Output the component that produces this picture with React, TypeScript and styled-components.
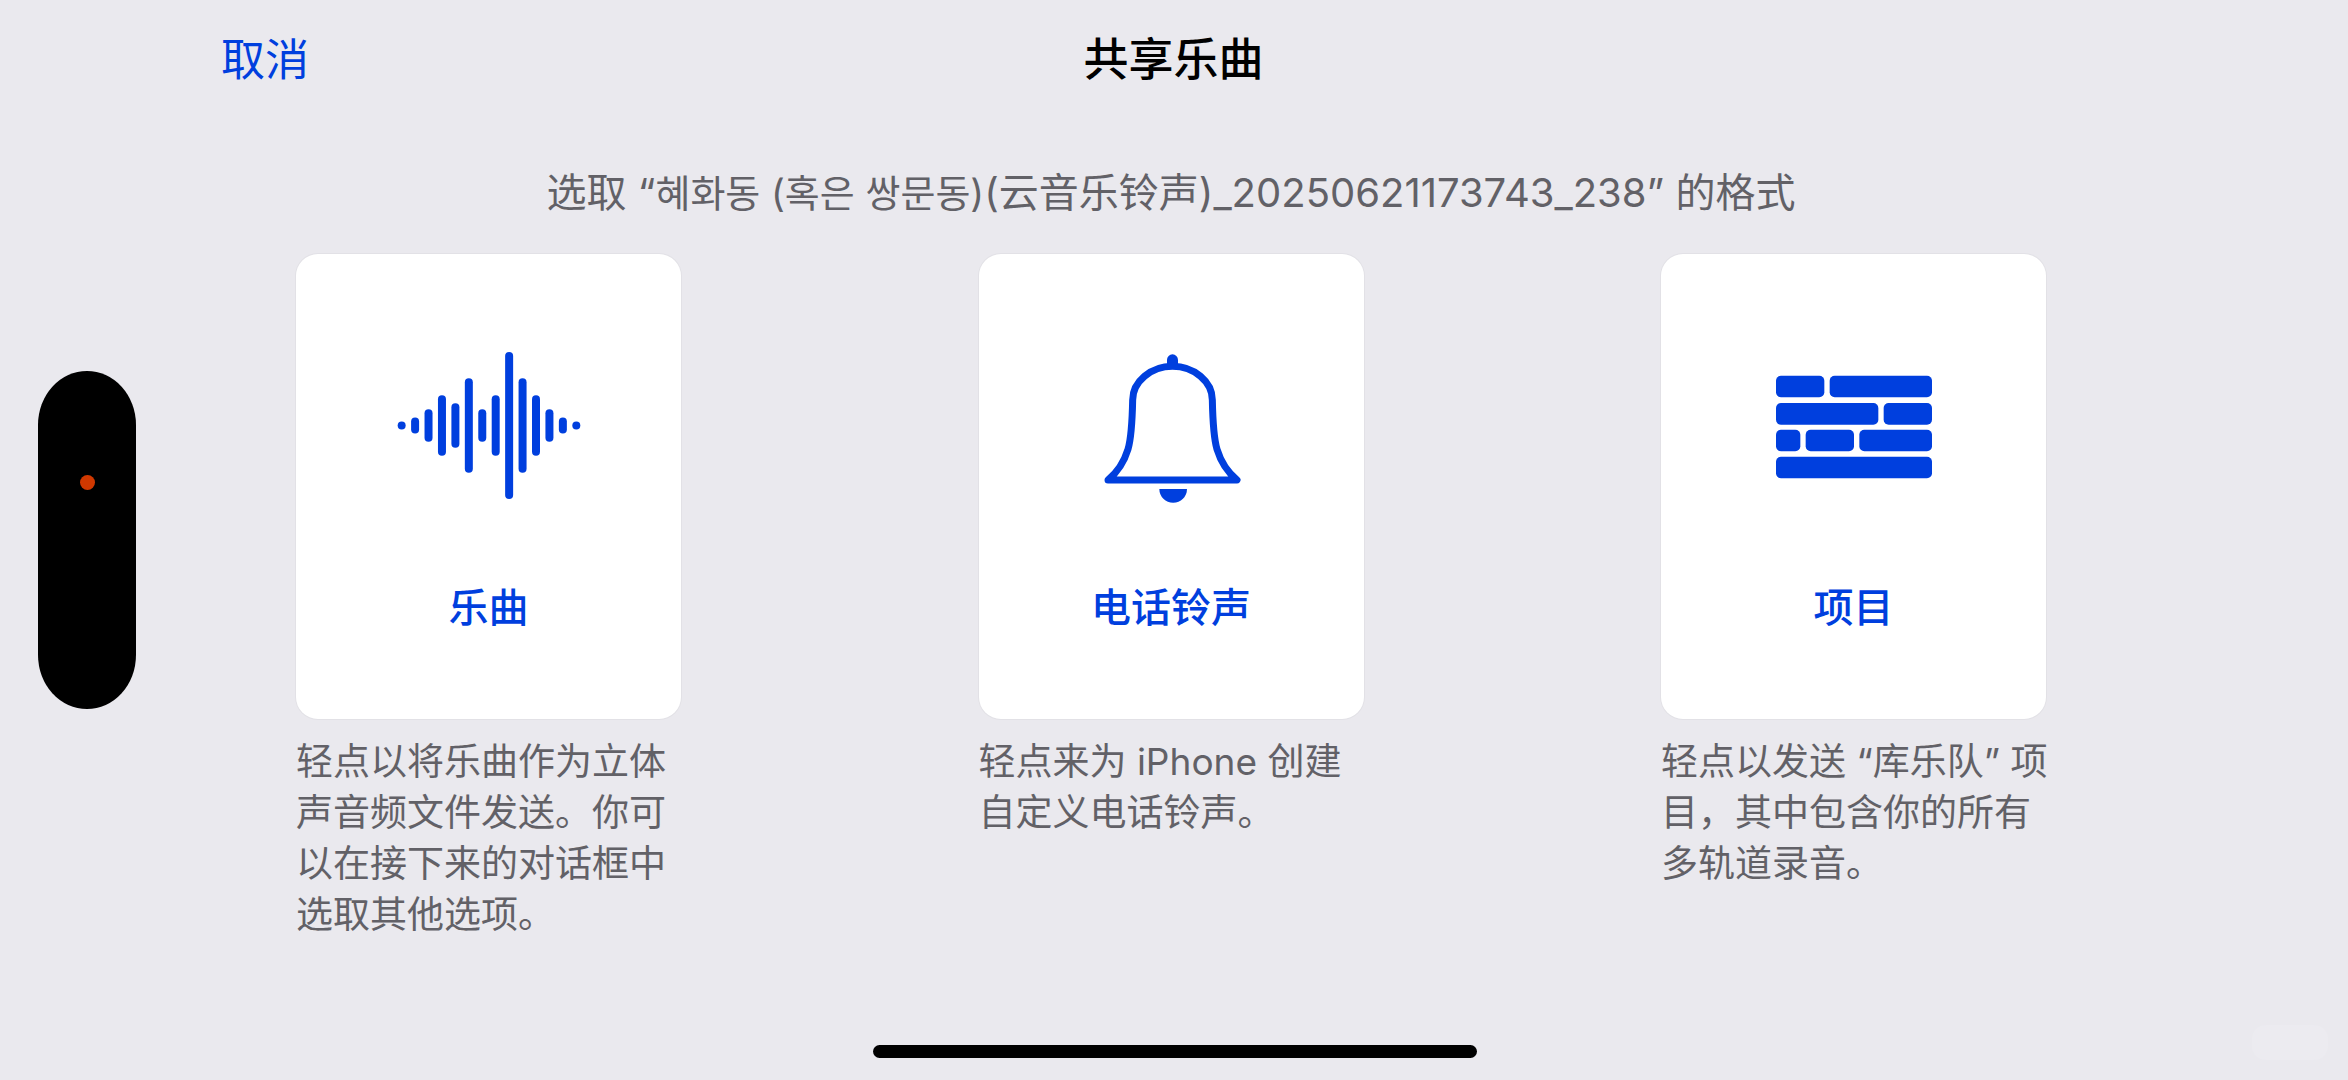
import React from "react";
import styled, { createGlobalStyle } from "styled-components";

const BLUE = "#003fde";
const INK = "#626167";
const CANVAS = "#eae9ee";

const GlobalStyle = createGlobalStyle`
  *, *::before, *::after { box-sizing: border-box; }
  body {
    margin: 0;
    background: ${CANVAS};
    font-family: Inter, "Noto Sans CJK SC", "Noto Sans CJK KR", sans-serif;
  }
  button { font: inherit; border: 0; padding: 0; background: none; cursor: pointer; }
`;

const Page = styled.div`
  min-height: 100vh;
  display: flex;
  flex-direction: column;
  color: ${INK};
`;

const NavBar = styled.header`
  display: grid;
  grid-template-columns: 1fr auto 1fr;
  align-items: center;
  height: 120px;
  padding: 0 222px 0 221px;
`;

const CancelButton = styled.button`
  && {
    justify-self: start;
    color: ${BLUE};
    font-size: 44px;
    line-height: 64px;
  }
`;

const Title = styled.h1`
  margin: 0;
  color: #000;
  font-size: 45px;
  line-height: 64px;
  font-weight: 500;
`;

const Content = styled.main`
  padding: 47px 302px 0 296px;
`;

const Prompt = styled.p`
  margin: 0 0 35px;
  font-size: 40px;
  line-height: 52px;
  text-align: center;
`;

const Korean = styled.span`
  font-size: 38px;
`;

const Options = styled.div`
  display: flex;
  justify-content: space-between;
`;

const Option = styled.section`
  width: 385px;
`;

const Card = styled.button`
  && {
    display: flex;
    flex-direction: column;
    align-items: center;
    gap: 78px;
    width: 100%;
    padding: 97px 0 85px;
    border-radius: 22px;
    background: #fff;
    box-shadow: 0 0 0 1px #e2e1e6;
    color: ${BLUE};
  }
`;

const Artwork = styled.svg`
  display: block;
  width: 210px;
  height: 153px;
  fill: ${BLUE};
`;

const CardLabel = styled.span`
  font-size: 40px;
  line-height: 52px;
  font-weight: 500;
`;

const Caption = styled.p`
  margin: 17px -8px 0 0;
  font-size: 37px;
  line-height: 51px;
`;

const Island = styled.div`
  position: fixed;
  left: 38px;
  top: 50%;
  width: 98px;
  height: 338px;
  margin-top: -169px;
  padding-top: 104px;
  border-radius: 49px / 54px;
  background: #000;
`;

const RecordingDot = styled.div`
  width: 15px;
  height: 15px;
  margin: 0 auto;
  border-radius: 50%;
  background: #d03800;
`;

const HomeIndicator = styled.div`
  position: fixed;
  left: 50%;
  bottom: 22px;
  width: 604px;
  height: 13px;
  margin-left: -301px;
  border-radius: 7px;
  background: #000;
`;

const CornerMark = styled.div`
  position: fixed;
  right: 20px;
  bottom: 20px;
  width: 76px;
  height: 35px;
  border-radius: 14px;
  background: #ecebf0;
`;

const barHeights = [24, 48, 97, 182, 134, 283, 97, 182, 441, 283, 182, 97, 48, 24];

const Waveform = () => (
  <Artwork viewBox="312 333 630 459" aria-hidden="true">
    {barHeights.map((h, i) => (
      <rect key={i} x={353 + i * 40.3} y={556.5 - h / 2} width="24" height={h} rx="12" />
    ))}
  </Artwork>
);

const Bell = () => (
  <Artwork viewBox="320 333 630 459" aria-hidden="true">
    <path d="M623 385V359.500a16.500 16.500 0 0 1 33 0V385Z" />
    <path
      fill="none"
      stroke={BLUE}
      strokeWidth="21"
      strokeLinejoin="round"
      d="M446 720C473 698 495 664 506 628C517 590 519 530 520 480C520 425 575 379 639.500 379C704 379 759 425 759 480C760 530 762 590 773 628C784 664 806 698 833 720Z"
    />
    <path d="M600 747H683A41.500 41.500 0 0 1 600 747Z" />
  </Artwork>
);

const bricks = [
  [407, 407, 145], [568, 407, 307],
  [407, 489, 307], [730, 489, 145],
  [407, 569, 73], [496, 569, 145], [657, 569, 218],
  [407, 650, 468],
];

const Bricks = () => (
  <Artwork viewBox="326 333 630 459" aria-hidden="true">
    {bricks.map(([x, y, w]) => (
      <rect key={`${x}-${y}`} x={x} y={y} width={w} height="65" rx="15" />
    ))}
  </Artwork>
);

const options = [
  {
    id: "song",
    label: "乐曲",
    icon: <Waveform />,
    caption: "轻点以将乐曲作为立体声音频文件发送。你可以在接下来的对话框中选取其他选项。",
  },
  {
    id: "ringtone",
    label: "电话铃声",
    icon: <Bell />,
    caption: "轻点来为 iPhone 创建自定义电话铃声。",
  },
  {
    id: "project",
    label: "项目",
    icon: <Bricks />,
    caption: "轻点以发送 “库乐队” 项目，其中包含你的所有多轨道录音。",
  },
];

export default function App() {
  return (
    <Page lang="zh-CN">
      <GlobalStyle />
      <NavBar>
        <CancelButton type="button">取消</CancelButton>
        <Title>共享乐曲</Title>
      </NavBar>
      <Content>
        <Prompt>
          选取 “<Korean lang="ko">혜화동 (혹은 쌍문동)</Korean>(云音乐铃声)_20250621173743_238” 的格式
        </Prompt>
        <Options>
          {options.map((o) => (
            <Option key={o.id}>
              <Card type="button" aria-describedby={`${o.id}-caption`}>
                {o.icon}
                <CardLabel>{o.label}</CardLabel>
              </Card>
              <Caption id={`${o.id}-caption`}>{o.caption}</Caption>
            </Option>
          ))}
        </Options>
      </Content>
      <Island aria-hidden="true">
        <RecordingDot />
      </Island>
      <HomeIndicator aria-hidden="true" />
      <CornerMark aria-hidden="true" />
    </Page>
  );
}
